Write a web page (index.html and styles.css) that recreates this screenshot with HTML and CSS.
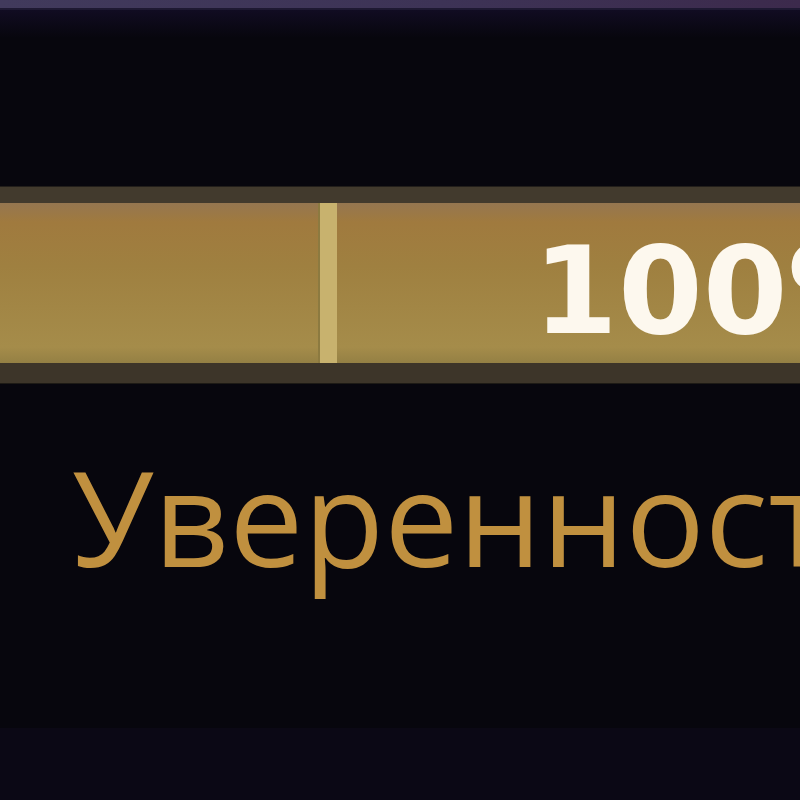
FILE: index.html
```html
<!DOCTYPE html>
<html lang="ru">
<head>
    <meta charset="UTF-8">
    <meta name="viewport" content="width=device-width, initial-scale=1.0">
    <title>Уверенность</title>
    <link rel="stylesheet" href="styles.css">
</head>
<body>
    <div class="topbar"></div>
    <div class="glow"></div>

    <div class="meter">
        <div class="fill">
            <div class="seg"></div>
            <div class="tick"></div>
            <div class="seg rest">
                <span class="value">100%</span>
            </div>
        </div>
    </div>

    <div class="label">Уверенность</div>

    <div class="footer"></div>
</body>
</html>
```

FILE: styles.css
```css
html, body {
    height: 100%;
}
body {
    margin: 0;
    background: #07060d;
    overflow: hidden;
    display: flex;
    flex-direction: column;
    font-family: "Open Sans", "DejaVu Sans", sans-serif;
}
.topbar {
    height: 8px;
    flex-shrink: 0;
    background: linear-gradient(90deg, #413a5c, #3d3356 55%, #3c2a4c);
    border-bottom: 2px solid #1e1932;
}
.glow {
    height: 28px;
    flex-shrink: 0;
    background: linear-gradient(180deg, #110c22, #07060d);
}
.meter {
    margin-top: 149px;
    width: 900px;
    flex-shrink: 0;
    border-top: 16px solid #423a2d;
    border-bottom: 20px solid #3d3529;
    box-shadow: 0 -1px 0 #221e1a, 0 1px 0 #1d1a15;
}
.fill {
    display: flex;
    height: 160px;
    background: linear-gradient(180deg, #957650 0%, #a07a3e 12%, #9f8040 40%, #a58c4a 90%, #948044 100%);
}
.seg {
    width: 320px;
}
.tick {
    width: 17px;
    background: #c8b26e;
    box-shadow: -2px 0 0 #8c7a40;
}
.rest {
    flex: 1;
    padding-left: 196px;
    padding-top: 19px;
}
.value {
    font-family: "DejaVu Sans", sans-serif;
    font-weight: bold;
    font-size: 122px;
    line-height: 138px;
    color: #fdf8ee;
    white-space: nowrap;
}
.label {
    margin-top: 67px;
    padding-left: 72px;
    font-size: 132px;
    line-height: 1;
    color: #c0903f;
    white-space: nowrap;
    flex-shrink: 0;
}
.footer {
    margin-top: auto;
    height: 72px;
    flex-shrink: 0;
    background: #0b0815;
}
```
